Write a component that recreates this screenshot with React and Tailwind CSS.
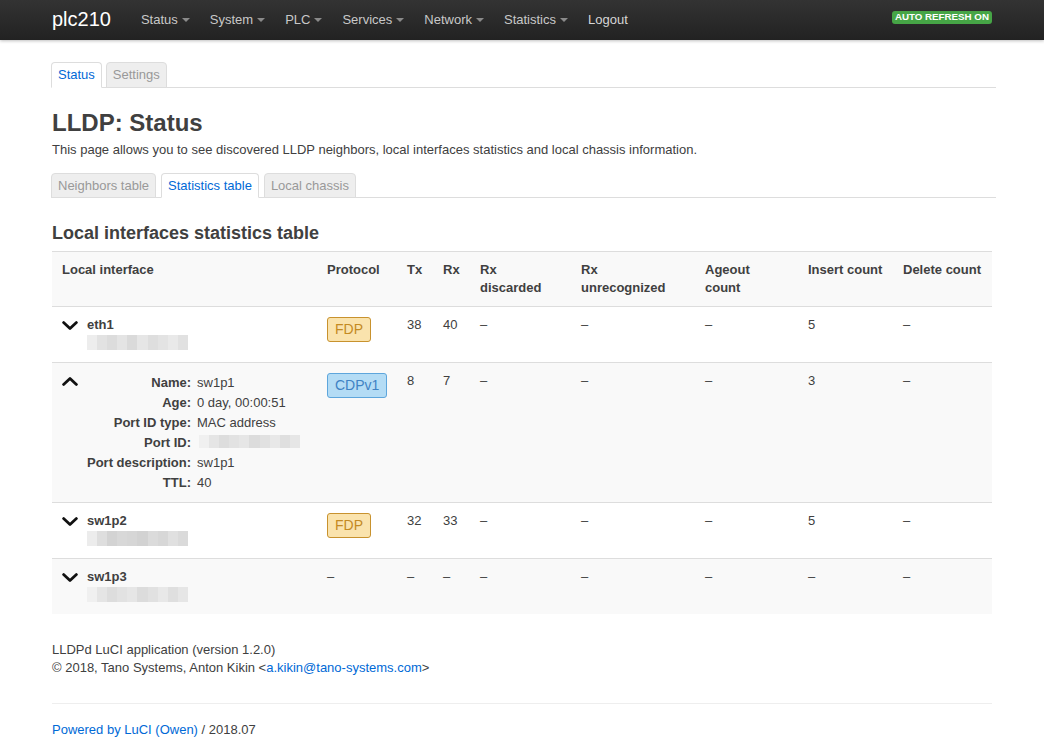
import React from "react";

const navItems = ["Status", "System", "PLC", "Services", "Network", "Statistics"];

function Caret() {
  return (
    <span className="ml-[4px] inline-block w-0 h-0 border-l-[4px] border-r-[4px] border-t-[4px] border-l-transparent border-r-transparent border-t-[#8a8a8a] align-middle mt-[-1px]" />
  );
}

function ChevronDown() {
  return (
    <svg width="16" height="10" viewBox="0 0 16 10" className="block mt-[5px] shrink-0">
      <path d="M1.6 1.6 L8 7.6 L14.4 1.6" fill="none" stroke="#111" strokeWidth="2.8" strokeLinecap="round" strokeLinejoin="round" />
    </svg>
  );
}

function ChevronUp() {
  return (
    <svg width="16" height="10" viewBox="0 0 16 10" className="block mt-[4px] shrink-0">
      <path d="M1.6 8.4 L8 2.4 L14.4 8.4" fill="none" stroke="#111" strokeWidth="2.8" strokeLinecap="round" strokeLinejoin="round" />
    </svg>
  );
}

const blurA = ["#ededed", "#e2e2e2", "#dcdcdc", "#e4e4e4", "#dadada", "#e6e6e6", "#dedede", "#e3e3e3", "#e9e9e9", "#e1e1e1"];
const blurB = ["#ececec", "#dedede", "#d3d3d3", "#d8d8d8", "#d6d6d6", "#d2d2d2", "#dbdbdb", "#d7d7d7", "#e0e0e0", "#dadada"];
const blurC = ["#f0f0f0", "#e5e5e5", "#dddddd", "#e2e2e2", "#e6e6e6", "#dcdcdc", "#e1e1e1", "#e8e8e8", "#dfdfdf", "#e6e6e6"];

function Blur({ colors, w = 101, h = 15 }) {
  return (
    <div className="flex" style={{ width: w, height: h }}>
      {colors.map((c, i) => (
        <div key={i} className="flex-1 h-full" style={{ background: c }} />
      ))}
    </div>
  );
}

function Badge({ type }) {
  if (type === "FDP")
    return (
      <span className="inline-block mt-[1px] px-[7px] leading-[23px] text-[14px] rounded-[3px] border border-[#c8922e] bg-[#fae3ad] text-[#c48a22]">
        FDP
      </span>
    );
  return (
    <span className="inline-block mt-[1px] px-[7px] leading-[23px] text-[14px] rounded-[3px] border border-[#5ea6dc] bg-[#b4dcf5] text-[#3f82c4]">
      CDPv1
    </span>
  );
}

function Tab({ label, active, tall }) {
  return (
    <li
      className={
        "mb-[-1px] px-[6px] border rounded-t-[4px] " +
        (tall ? "leading-[24px] " : "leading-[23px] ") +
        (active
          ? "bg-white border-[#dddddd] border-b-white text-[#0069d6]"
          : "bg-[#eeeeee] border-[#dddddd] text-[#999999]")
      }
    >
      {label}
    </li>
  );
}

const th = "text-left align-top font-bold px-[10px] pt-[9px] pb-[9px]";
const td = "align-top px-[10px] pt-[9px] pb-[10px]";

function IfaceCell({ name, blur }) {
  return (
    <div className="flex gap-[9px]">
      <ChevronDown />
      <div>
        <div className="font-bold">{name}</div>
        <div className="h-[18px] pt-[1px]">
          <Blur colors={blur} />
        </div>
      </div>
    </div>
  );
}

export default function App() {
  return (
    <div
      className="min-h-[744px] bg-white text-[#404040] text-[13px] leading-[18px]"
      style={{ fontFamily: '"Liberation Sans", Arial, Helvetica, sans-serif' }}
    >
      {/* Top bar */}
      <div className="h-[40px] bg-gradient-to-b from-[#333333] to-[#222222] shadow-[0_1px_3px_rgba(0,0,0,0.25)]">
        <div className="w-[940px] mx-auto flex items-start h-full">
          <div className="text-white text-[20px] leading-[20px] pt-[9px] mr-[20px]">plc210</div>
          <ul className="flex">
            {navItems.map((n) => (
              <li key={n} className="px-[10px] pt-[10px] leading-[19px] text-[#c8c8c8] whitespace-nowrap">
                {n}
                <Caret />
              </li>
            ))}
            <li className="px-[10px] pt-[10px] leading-[19px] text-[#d6d6d6]">Logout</li>
          </ul>
          <div className="ml-auto mt-[11px] bg-[#46a546] text-white font-bold uppercase text-[9.75px] leading-[10px] pt-[1px] pb-[2px] px-[3px] rounded-[3px] whitespace-nowrap">
            Auto Refresh On
          </div>
        </div>
      </div>

      <div className="w-[940px] mx-auto pt-[22px]">
        {/* Top tabs */}
        <ul className="flex gap-[4px] border-b border-[#dddddd] w-[945px] -ml-px">
          <Tab label="Status" active tall />
          <Tab label="Settings" tall />
        </ul>

        <h2 className="mt-[17px] text-[24px] leading-[36px] font-bold text-[#404040]">LLDP: Status</h2>
        <p>This page allows you to see discovered LLDP neighbors, local interfaces statistics and local chassis information.</p>

        {/* Sub tabs */}
        <ul className="mt-[14px] flex gap-[5px] border-b border-[#dddddd] w-[945px] -ml-px">
          <Tab label="Neighbors table" />
          <Tab label="Statistics table" active />
          <Tab label="Local chassis" />
        </ul>

        <h3 className="mt-[22px] text-[18px] leading-[27px] font-bold">Local interfaces statistics table</h3>

        <table className="mt-[4px] w-[940px] border-collapse table-fixed">
          <thead>
            <tr className="bg-[#f9f9f9] border-t border-b border-[#dddddd]">
              <th className={th + " w-[265px]"}>Local interface</th>
              <th className={th + " w-[80px]"}>Protocol</th>
              <th className={th + " w-[36px]"}>Tx</th>
              <th className={th + " w-[37px]"}>Rx</th>
              <th className={th + " w-[101px]"}>Rx<br />discarded</th>
              <th className={th + " w-[124px]"}>Rx<br />unrecognized</th>
              <th className={th + " w-[103px]"}>Ageout<br />count</th>
              <th className={th + " w-[95px]"}>Insert count</th>
              <th className={th + " w-[99px]"}>Delete count</th>
            </tr>
          </thead>
          <tbody>
            <tr className="bg-white border-b border-[#dddddd]">
              <td className={td}><IfaceCell name="eth1" blur={blurA} /></td>
              <td className={td}><Badge type="FDP" /></td>
              <td className={td}>38</td>
              <td className={td}>40</td>
              <td className={td}>–</td>
              <td className={td}>–</td>
              <td className={td}>–</td>
              <td className={td}>5</td>
              <td className={td}>–</td>
            </tr>
            <tr className="bg-[#f9f9f9] border-b border-[#dddddd]">
              <td className={td}>
                <div className="flex gap-[9px]">
                  <ChevronUp />
                  <div className="grid grid-cols-[auto_auto] justify-start gap-x-[6px] leading-[20px] mt-[1px] mb-[-1px]">
                    <div className="font-bold text-right">Name:</div>
                    <div>sw1p1</div>
                    <div className="font-bold text-right">Age:</div>
                    <div>0 day, 00:00:51</div>
                    <div className="font-bold text-right">Port ID type:</div>
                    <div>MAC address</div>
                    <div className="font-bold text-right">Port ID:</div>
                    <div className="pt-[2px] pl-[2px]"><Blur colors={blurC} w={101} h={13} /></div>
                    <div className="font-bold text-right">Port description:</div>
                    <div>sw1p1</div>
                    <div className="font-bold text-right">TTL:</div>
                    <div>40</div>
                  </div>
                </div>
              </td>
              <td className={td}><Badge type="CDPv1" /></td>
              <td className={td}>8</td>
              <td className={td}>7</td>
              <td className={td}>–</td>
              <td className={td}>–</td>
              <td className={td}>–</td>
              <td className={td}>3</td>
              <td className={td}>–</td>
            </tr>
            <tr className="bg-white border-b border-[#dddddd]">
              <td className={td}><IfaceCell name="sw1p2" blur={blurB} /></td>
              <td className={td}><Badge type="FDP" /></td>
              <td className={td}>32</td>
              <td className={td}>33</td>
              <td className={td}>–</td>
              <td className={td}>–</td>
              <td className={td}>–</td>
              <td className={td}>5</td>
              <td className={td}>–</td>
            </tr>
            <tr className="bg-[#f9f9f9]">
              <td className={td}><IfaceCell name="sw1p3" blur={blurC} /></td>
              <td className={td}>–</td>
              <td className={td}>–</td>
              <td className={td}>–</td>
              <td className={td}>–</td>
              <td className={td}>–</td>
              <td className={td}>–</td>
              <td className={td}>–</td>
              <td className={td}>–</td>
            </tr>
          </tbody>
        </table>

        <div className="mt-[27px]">
          <div>LLDPd LuCI application (version 1.2.0)</div>
          <div>
            © 2018, Tano Systems, Anton Kikin &lt;<span className="text-[#0069d6]">a.kikin@tano-systems.com</span>&gt;
          </div>
        </div>

        <div className="mt-[26px] border-t border-[#eeeeee]" />
        <div className="mt-[17px]">
          <span className="text-[#0069d6]">Powered by LuCI (Owen)</span> / 2018.07
        </div>
      </div>
    </div>
  );
}
